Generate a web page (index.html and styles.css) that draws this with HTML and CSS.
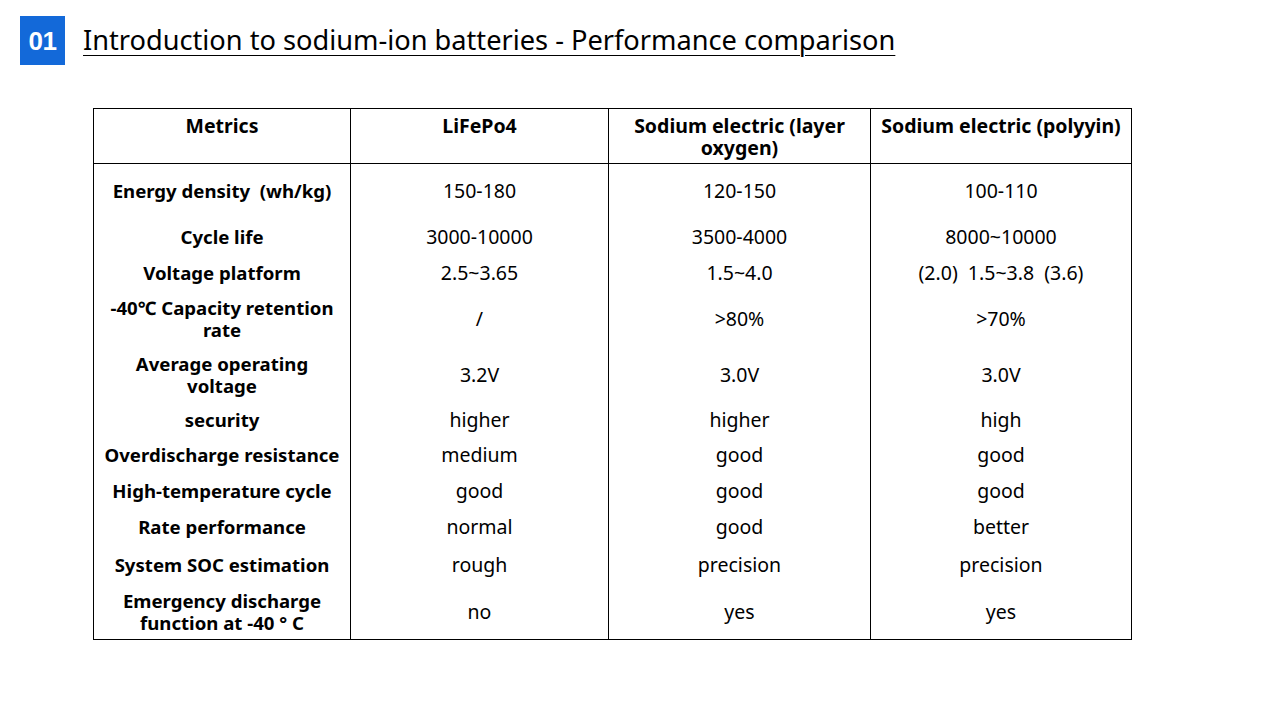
FILE: index.html
```html
<!DOCTYPE html>
<html lang="en">
<head>
<meta charset="utf-8">
<title>Performance comparison</title>
<link rel="stylesheet" href="styles.css">
</head>
<body>
<header class="head">
  <div class="badge">01</div>
  <h1 class="title">Introduction to sodium-ion batteries - Performance comparison</h1>
</header>
<main class="wrap">
  <table class="cmp">
    <colgroup>
      <col class="c1"><col class="c2"><col class="c3"><col class="c4">
    </colgroup>
    <thead>
      <tr>
        <th>Metrics</th>
        <th>LiFePo4</th>
        <th>Sodium electric (layer oxygen)</th>
        <th>Sodium electric (polyyin)</th>
      </tr>
    </thead>
    <tbody>
      <tr class="h55"><td class="m">Energy density&nbsp;&nbsp;(wh/kg)</td><td>150-180</td><td>120-150</td><td>100-110</td></tr>
      <tr class="h36"><td class="m">Cycle life</td><td>3000-10000</td><td>3500-4000</td><td>8000~10000</td></tr>
      <tr class="h36"><td class="m">Voltage platform</td><td>2.5~3.65</td><td>1.5~4.0</td><td>(2.0)&nbsp;&nbsp;1.5~3.8&nbsp;&nbsp;(3.6)</td></tr>
      <tr class="h56"><td class="m">-40℃ Capacity retention rate</td><td>/</td><td>&gt;80%</td><td>&gt;70%</td></tr>
      <tr class="h56"><td class="m">Average operating voltage</td><td>3.2V</td><td>3.0V</td><td>3.0V</td></tr>
      <tr class="h34"><td class="m">security</td><td>higher</td><td>higher</td><td>high</td></tr>
      <tr class="h36"><td class="m">Overdischarge resistance</td><td>medium</td><td>good</td><td>good</td></tr>
      <tr class="h36"><td class="m">High-temperature cycle</td><td>good</td><td>good</td><td>good</td></tr>
      <tr class="h36"><td class="m">Rate performance</td><td>normal</td><td>good</td><td>better</td></tr>
      <tr class="h40"><td class="m">System SOC estimation</td><td>rough</td><td>precision</td><td>precision</td></tr>
      <tr class="h55"><td class="m">Emergency discharge function at -40 ° C</td><td>no</td><td>yes</td><td>yes</td></tr>
    </tbody>
  </table>
</main>
</body>
</html>
```

FILE: styles.css
```css
* { box-sizing: border-box; }
html, body { margin: 0; padding: 0; background: #fff; }
body {
  width: 1280px;
  height: 720px;
  overflow: hidden;
  font-family: "Noto Sans", "Open Sans", "Noto Sans CJK SC", sans-serif;
  color: #000;
}
.head {
  display: flex;
  align-items: center;
  gap: 18px;
  padding: 16px 0 0 20px;
  height: 65px;
}
.badge {
  width: 45px;
  height: 49px;
  background: #1369d9;
  color: #fff;
  font-family: "Liberation Sans", Arial, sans-serif;
  font-weight: bold;
  font-size: 26px;
  letter-spacing: -0.5px;
  display: flex;
  align-items: center;
  justify-content: center;
  padding-top: 1px;
}
.title {
  margin: 0;
  font-weight: normal;
  font-size: 27.2px;
  text-decoration: underline;
  text-decoration-thickness: 1px;
  text-underline-offset: 5px;
  line-height: 1;
  letter-spacing: 0;
  position: relative;
  top: -1px;
}
.wrap {
  padding: 43px 0 0 93px;
}
.cmp {
  border-collapse: collapse;
  width: 1038px;
  table-layout: fixed;
  border: 1px solid #000;
}
.c1 { width: 257px; }
.c2 { width: 258px; }
.c3 { width: 262px; }
.c4 { width: 261px; }
.cmp th {
  height: 55px;
  vertical-align: top;
  font-size: 19.5px;
  font-weight: bold;
  line-height: 22px;
  padding: 6px 4px 0;
  border: 1px solid #000;
}
.cmp td {
  border-left: 1px solid #000;
  border-right: 1px solid #000;
  text-align: center;
  vertical-align: middle;
  font-size: 19.5px;
  line-height: 22px;
  padding: 0 6px;
}
.cmp td.m { font-weight: bold; font-size: 18.6px; padding: 0 9px; }
.h56 { height: 56px; }
.h55 { height: 55px; }
.h40 { height: 40px; }
.h36 { height: 36px; }
.h34 { height: 34px; }
```
